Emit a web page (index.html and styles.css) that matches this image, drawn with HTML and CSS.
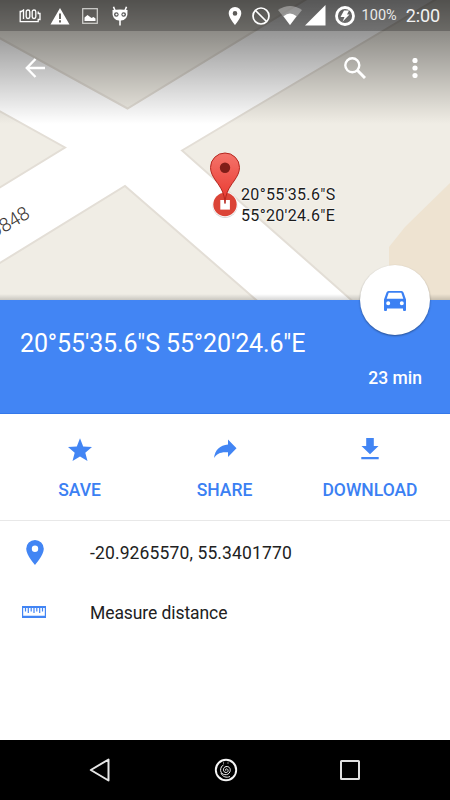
FILE: index.html
```html
<!DOCTYPE html>
<html lang="en">
<head>
<meta charset="UTF-8">
<meta name="viewport" content="width=device-width, initial-scale=1.0">
<title>Dropped pin</title>
<link rel="stylesheet" href="styles.css">
</head>
<body>

<div class="map">
    <svg class="map-canvas" viewBox="0 0 450 300">
        <rect width="450" height="300" fill="#fff"/>
        <g fill="#f0ede5" stroke="#e3ded6" stroke-width="2">
            <path d="M-5 35.500L127.500 108.500L315-6L-5-6Z"/>
            <path d="M-5 108.500L65 147.500L-5 190.500Z"/>
            <path d="M182 150.500L455-12V305H357Z"/>
            <path d="M-5 266L125 186L262 305H-5Z"/>
        </g>
        <path d="M450 183L405 227L389 247V300H450Z" fill="#eee3d1"/>
    </svg>
    <span class="road-label">D848</span>
    <svg class="marker" viewBox="0 0 40 70">
        <defs>
            <linearGradient id="pin" x1="0" y1="0" x2="0" y2="1">
                <stop offset="0" stop-color="#f4746b"/>
                <stop offset="1" stop-color="#e9352c"/>
            </linearGradient>
        </defs>
        <circle cx="20" cy="55.500" r="12.500" fill="#bbb" opacity=".6"/>
        <circle cx="20" cy="54.500" r="12.500" fill="#fff"/>
        <circle cx="20" cy="54.500" r="11.700" fill="#db4437"/>
        <rect x="15.300" y="50" width="9.600" height="9.600" fill="#fff"/>
        <path d="M20 53.500C19.500 43 16 38 11 31C7.500 26 5.500 22 5.500 17.500a14.500 14.500 0 0 1 29 0C34.500 22 32.500 26 29 31C24 38 20.500 43 20 53.500Z" fill="url(#pin)" stroke="#b3261e" stroke-width="1"/>
        <circle cx="20" cy="17.800" r="5.200" fill="#7f1d18"/>
    </svg>
    <div class="marker-label">20°55'35.6"S<br>55°20'24.6"E</div>
    <div class="shade"></div>

    <div class="top">
        <div class="status-bar">
            <div class="status-left">
                <svg width="22" height="14" viewBox="0 0 22 14">
                    <path d="M3 2.500H1.200V12.700H19.200V10.500H21V4.500H19.200V2.500" fill="none" stroke="#fff" stroke-width="1.300"/>
                    <path d="M2.500 2.500L4.500 1V10" fill="none" stroke="#fff" stroke-width="1.300"/>
                    <rect x="7.200" y="1" width="3.600" height="8.500" rx="1.800" fill="none" stroke="#fff" stroke-width="1.300"/>
                    <rect x="13.200" y="1" width="3.600" height="8.500" rx="1.800" fill="none" stroke="#fff" stroke-width="1.300"/>
                </svg>
                <svg class="warn" width="20" height="18" viewBox="0 0 20 18">
                    <path d="M10 1L19.500 17.500H.500Z" fill="#fff"/>
                    <path d="M10 6.500V12M10 13.300V15.500" stroke="#666560" stroke-width="2"/>
                </svg>
                <svg class="photo" width="16" height="16" viewBox="0 0 16 16">
                    <rect x=".7" y=".7" width="14.600" height="14.600" fill="none" stroke="#d2d2cf" stroke-width="1.200"/>
                    <path d="M2.500 13V9.500L5.500 7L7.500 8.500L9.500 10L11.500 9L13.500 10.500V13Z" fill="#fff"/>
                </svg>
                <svg class="cid" width="18" height="20" viewBox="0 0 18 20">
                    <path d="M2.500 .800L4 4.500M15.500 .800L14 4.500M9 14V19.500" stroke="#fff" stroke-width="1.600"/>
                    <path d="M1.500 4Q9 3 16.500 4Q17.500 14.700 9 14.700T1.500 4Z" fill="#fff"/>
                    <circle cx="5.300" cy="8.500" r="2.300" fill="#555"/>
                    <circle cx="12.700" cy="8.500" r="2.300" fill="#555"/>
                    <circle cx="5.500" cy="8.500" r="1.100" fill="#fff"/>
                    <circle cx="12.500" cy="8.500" r="1.100" fill="#fff"/>
                </svg>
            </div>
            <div class="status-right">
                <svg class="loc" width="14" height="18" viewBox="0 0 14 18">
                    <path d="M7 0A6.300 6.300 0 0 0 .700 6.300C.700 11 7 18 7 18S13.300 11 13.300 6.300A6.300 6.300 0 0 0 7 0ZM7 4.100a2.300 2.300 0 1 1 0 4.600a2.300 2.300 0 0 1 0-4.600Z" fill="#fff"/>
                </svg>
                <svg class="block" width="18" height="18" viewBox="0 0 18 18">
                    <circle cx="9" cy="9" r="8" fill="none" stroke="#fff" stroke-width="1.700"/>
                    <path d="M3.500 3.500L14.500 14.500" stroke="#fff" stroke-width="1.700"/>
                </svg>
                <svg class="wifi" width="24" height="19" viewBox="0 0 24 19">
                    <path d="M0 4Q12-4 24 4L12 19Z" fill="#fff" opacity=".35"/>
                    <path d="M5.500 10.200Q12 4.800 18.500 10.200L12 19Z" fill="#fff"/>
                </svg>
                <svg class="signal" width="21" height="21" viewBox="0 0 21 21">
                    <path d="M20.500 0V20.500H0Z" fill="#fff"/>
                </svg>
                <svg class="bolt" width="20" height="20" viewBox="0 0 20 20">
                    <circle cx="10" cy="10" r="8.500" fill="none" stroke="#fff" stroke-width="2.800"/>
                    <path d="M9 4.500H14L12 8.500H14.500L7.500 15.700L9.500 11H5.500Z" fill="#fff"/>
                </svg>
                <span class="percent">100%</span>
                <span class="clock">2:00</span>
            </div>
        </div>
        <div class="app-bar">
            <svg width="20" height="20" viewBox="0 0 20 20">
                <path d="M10.500 1L1.800 10L10.500 19M1.800 10H20" fill="none" stroke="#fff" stroke-width="2.400"/>
            </svg>
            <svg class="search" width="22" height="22" viewBox="0 0 22 22">
                <circle cx="8.300" cy="8.300" r="7" fill="none" stroke="#fff" stroke-width="2.400"/>
                <path d="M13.300 13.300L21 21" stroke="#fff" stroke-width="3"/>
            </svg>
            <svg width="6" height="20" viewBox="0 0 6 20" fill="#fff">
                <circle cx="3" cy="2.500" r="2.600"/>
                <circle cx="3" cy="10" r="2.600"/>
                <circle cx="3" cy="17.500" r="2.600"/>
            </svg>
        </div>
    </div>
</div>

<div class="place">
    <h1>20°55'35.6"S 55°20'24.6"E</h1>
    <p>23 min</p>
    <div class="fab">
        <svg width="22" height="20" viewBox="0 0 22 20">
            <path d="M4.500 0H17.500Q19 0 19.500 1.500L22 8.500V19Q22 20 21 20H20Q19 20 19 19V17.500H3V19Q3 20 2 20H1Q0 20 0 19V8.500L2.500 1.500Q3 0 4.500 0ZM4.700 1.700L2.700 7.800H19.300L17.300 1.700ZM4.200 10.200a2 2 0 1 0 0 4a2 2 0 0 0 0-4ZM17.800 10.200a2 2 0 1 0 0 4a2 2 0 0 0 0-4Z" fill="#3b80f3" fill-rule="evenodd"/>
        </svg>
    </div>
</div>

<div class="actions">
    <div class="action">
        <svg width="24" height="24" viewBox="0 0 24 24" fill="#4285f4">
            <path d="M12 .300L15.200 8.400L24 9L17.300 14.700L19.500 23L12 18.500L4.500 23L6.700 14.700L0 9L8.800 8.400Z"/>
        </svg>
        <span>SAVE</span>
    </div>
    <div class="action">
        <svg width="24" height="24" viewBox="0 0 24 24" fill="#4285f4">
            <path d="M15 1.500L23.500 10.200L15 19V14.300C8 13.500 4 15.500 1 20C2 12 7 7 15 6.500Z"/>
        </svg>
        <span>SHARE</span>
    </div>
    <div class="action">
        <svg width="24" height="24" viewBox="0 0 24 24" fill="#4285f4">
            <path d="M8.200 0H15.800V8H20.500L12 16.200L3.500 8H8.200ZM3.300 19H20.700V21.200H3.300Z"/>
        </svg>
        <span class="download">DOWNLOAD</span>
    </div>
</div>

<div class="details">
    <div class="row">
        <div class="icon">
            <svg width="18" height="25" viewBox="0 0 18 25">
                <path d="M9 0A8.800 8.800 0 0 0 .200 8.800C.200 15.300 9 25 9 25S17.800 15.300 17.800 8.800A8.800 8.800 0 0 0 9 0ZM9 5.600a3.200 3.200 0 1 1 0 6.400a3.200 3.200 0 0 1 0-6.400Z" fill="#4285f4"/>
            </svg>
        </div>
        <span class="coords">-20.9265570, 55.3401770</span>
    </div>
    <div class="row">
        <div class="icon ruler">
            <svg width="24" height="12" viewBox="0 0 24 12">
                <path d="M0 0H24V12H0ZM1.200 2V9.800H22.800V2Z" fill="#4285f4" fill-rule="evenodd"/>
                <path d="M3.500 1V5.500M6.300 1V7M9.200 1V5.500M12 1V7M14.800 1V5.500M17.700 1V7M20.500 1V5.500" stroke="#4285f4" stroke-width="1.200"/>
            </svg>
        </div>
        <span class="measure">Measure distance</span>
    </div>
</div>

<div class="nav-bar">
    <svg width="22" height="26" viewBox="0 0 22 26">
        <path d="M19.500 2.500V23.500L1.800 13Z" fill="none" stroke="#e6e6e6" stroke-width="2" stroke-linejoin="round"/>
    </svg>
    <svg class="home" width="24" height="24" viewBox="0 0 24 24" fill="none" stroke="#f5f5f5">
        <circle cx="12" cy="12" r="10.200" stroke-width="1.900"/>
        <path d="M12.200 12.600C11 12.600 11.300 10.700 12.700 10.900C14.800 11.300 14.500 14.500 12.100 14.500C8.600 14.500 8.500 9.300 12 8.600C15.400 8 17 11 16 13.600C14.500 18.300 7 17.500 6.600 12.500C6.400 9.800 8 7.500 9.500 7M7 15C8.500 19 12.500 20 16 18.500" stroke-width="1"/>
        <path d="M9.500 4.500V5.500M14 4.500V5.500" stroke-width="1"/>
    </svg>
    <svg width="22" height="22" viewBox="0 0 22 22">
        <rect x="2" y="2" width="18" height="18" rx=".5" fill="none" stroke="#e0e0e0" stroke-width="2"/>
    </svg>
</div>

</body>
</html>
```
FILE: styles.css
```css
* {
    box-sizing: border-box;
}
body {
    margin: 0;
    height: 800px;
    display: flex;
    flex-direction: column;
    overflow: hidden;
    background: #fff;
    color: #212121;
    font-family: Roboto, sans-serif;
}
svg {
    display: block;
    flex-shrink: 0;
}
.map {
    position: relative;
    height: 300px;
    overflow: hidden;
}
.map-canvas {
    position: absolute;
    top: 0;
    left: 0;
    width: 450px;
    height: 300px;
}
.shade {
    position: absolute;
    top: 0;
    left: 0;
    right: 0;
    bottom: 0;
    background: linear-gradient(to bottom, rgba(0,0,0,.55), rgba(0,0,0,0) 124px),
        linear-gradient(to top, rgba(0,0,0,.16), rgba(0,0,0,0) 6px);
}
.road-label {
    position: absolute;
    left: -13px;
    top: 212px;
    font-size: 19px;
    line-height: 22px;
    font-weight: 300;
    color: #3a3531;
    transform: rotate(-31deg);
}
.marker {
    position: absolute;
    left: 205px;
    top: 150px;
    width: 40px;
    height: 70px;
}
.marker-label {
    position: absolute;
    left: 241px;
    top: 184px;
    font-size: 16px;
    line-height: 21px;
    letter-spacing: .33px;
    color: #1b1b1b;
    text-shadow: 0 0 2px #fff, 0 0 2px #fff;
}
.top {
    position: relative; /* sits over the map */
}
.status-bar {
    height: 31px;
    display: flex;
    justify-content: space-between;
    align-items: center;
    padding: 0 10px 0 19px;
    background: rgba(0,0,0,.24);
    color: #fff;
}
.status-left {
    display: flex;
    align-items: center;
}
.warn {
    margin-left: 9px;
}
.photo {
    margin-left: 12px;
}
.cid {
    margin-left: 13px;
}
.status-right {
    display: flex;
    align-items: center;
}
.block {
    margin-left: 10px;
}
.wifi {
    margin-left: 8px;
}
.signal {
    margin-left: 3px;
}
.bolt {
    margin-left: 9px;
}
.percent {
    margin-left: 7px;
    font-size: 14.5px;
    color: #e9e9e9;
}
.clock {
    margin-left: 9px;
    font-size: 18px;
    letter-spacing: -.1px;
    color: #f2f2f2;
}
.app-bar {
    height: 74px;
    display: flex;
    align-items: center;
    padding: 0 32px 0 25px;
}
.search {
    margin-left: auto;
    margin-right: 46px;
}
.place {
    position: relative;
    height: 114px;
    padding: 28px 28px 0 20px;
    background: #4285f4;
    border-bottom: 1px solid #3478ea;
    color: #fff;
}
.place h1 {
    margin: 0;
    font-size: 25px;
    line-height: 32px;
    font-weight: 400;
    letter-spacing: -.13px;
    white-space: nowrap;
}
.place p {
    margin: 7px 0 0;
    text-align: right;
    font-size: 17.5px;
    line-height: 22px;
    font-weight: 500;
}
.fab {
    position: absolute;
    right: 20px;
    top: -35px;
    width: 70px;
    height: 70px;
    border-radius: 50%;
    display: flex;
    align-items: center;
    justify-content: center;
    padding-top: 2px;
    background: #fff;
    box-shadow: 0 1px 2px rgba(0,0,0,.4);
}
.actions {
    height: 107px;
    display: flex;
    padding: 24px 7px 0;
    border-bottom: 1px solid #e8e8e8;
}
.action {
    width: 145px;
    display: flex;
    flex-direction: column;
    align-items: center;
    gap: 17px;
    color: #3b80f3;
    font-size: 17.5px;
    line-height: 22px;
    font-weight: 500;
}
.download {
    padding-left: 1px;
}
.details {
    flex: 1;
    padding-top: 1px;
}
.row {
    height: 60px;
    display: flex;
    align-items: center;
    font-size: 17.5px;
}
.row span {
    padding-top: 2px;
}
.coords {
    letter-spacing: .13px;
}
.measure {
    letter-spacing: -.08px;
}
.icon {
    width: 90px;
    padding-left: 26px;
}
.icon.ruler {
    padding-left: 22px;
}
.nav-bar {
    height: 60px;
    display: flex;
    justify-content: space-between;
    align-items: center;
    padding: 0 89px;
    background: #000;
}
.home {
    margin-left: 2px;
}
```
